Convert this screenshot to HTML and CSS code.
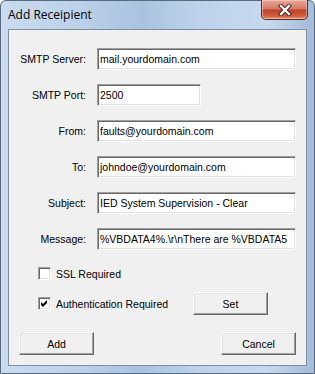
FILE: index.html
```html
<!DOCTYPE html>
<html lang="en">

<head>
    <meta charset="UTF-8">
    <title>Add Receipient</title>
    <link rel="stylesheet" href="styles.css">
</head>

<body>
    <div class="window">
        <!-- Title bar -->
        <div class="titlebar">
            <span class="title">Add Receipient</span>
            <button class="close-btn" type="button" aria-label="Close">
                <svg width="16" height="12" viewBox="0 0 16 12">
                    <path d="M4 2 L12 10 M12 2 L4 10" stroke="#3b1a14" stroke-width="4.2" stroke-linecap="square" fill="none" />
                    <path d="M4 2 L12 10 M12 2 L4 10" stroke="#ffffff" stroke-width="2.4" stroke-linecap="square" fill="none" />
                </svg>
            </button>
        </div>

        <!-- Client area -->
        <form class="client">
            <div class="fields">
                <label class="field-label" for="smtpServer">SMTP Server:</label>
                <input class="field-input" id="smtpServer" type="text" value="mail.yourdomain.com">

                <label class="field-label" for="smtpPort">SMTP Port:</label>
                <input class="field-input short" id="smtpPort" type="text" value="2500">

                <label class="field-label" for="from">From:</label>
                <input class="field-input" id="from" type="text" value="faults@yourdomain.com">

                <label class="field-label" for="to">To:</label>
                <input class="field-input" id="to" type="text" value="johndoe@yourdomain.com">

                <label class="field-label" for="subject">Subject:</label>
                <input class="field-input" id="subject" type="text" value="IED System Supervision - Clear">

                <label class="field-label" for="message">Message:</label>
                <input class="field-input" id="message" type="text" value="%VBDATA4%.\r\nThere are %VBDATA5">
            </div>

            <div class="options">
                <div class="option-row">
                    <span class="check"></span>
                    <span class="option-text">SSL Required</span>
                </div>
                <div class="option-row auth-row">
                    <span class="check checked">
                        <svg width="9" height="9" viewBox="0 0 9 9">
                            <polygon points="1,3 3,5 7,1 7,4 3,8 1,6" fill="#000" />
                        </svg>
                    </span>
                    <span class="option-text auth-text">Authentication Required</span>
                    <button class="win-btn" type="button">Set</button>
                </div>
            </div>

            <div class="actions">
                <button class="win-btn" type="button">Add</button>
                <button class="win-btn" type="button">Cancel</button>
            </div>
        </form>
    </div>
</body>

</html>
```

FILE: styles.css
```css
/* Windows 7 style dialog */
body {
    margin: 0;
    background-color: #ffffff;
    font-family: 'Liberation Sans', Arial, sans-serif;
    font-size: 10.5px;
    color: #000;
}

.window {
    width: 315px;
    height: 374px;
    box-sizing: border-box;
    border: 1px solid #5a6b7f;
    border-radius: 6px 6px 0 0;
    background: linear-gradient(to right, #c9dbef 0%, #bcd1e9 25%, #a9c2df 45%, #bdd2ea 62%, #c6d9ee 85%, #a3bcd9 100%);
    display: flex;
    flex-direction: column;
}

.titlebar {
    height: 28px;
    display: flex;
    align-items: flex-start;
    justify-content: space-between;
}

.title {
    font-family: 'Open Sans', 'Noto Sans', sans-serif;
    font-size: 12px;
    margin: 5px 0 0 7px;
    color: #000;
}

.close-btn {
    width: 47px;
    height: 20px;
    margin: -1px 6px 0 0;
    padding: 0;
    border: 1px solid #5d2a20;
    border-top: none;
    border-radius: 0 0 5px 5px;
    background: linear-gradient(to bottom, #e9a99b 0%, #d67a64 45%, #c0402a 55%, #d0603f 85%, #e49a7e 100%);
    box-shadow: inset 0 0 0 1px rgba(255, 220, 210, 0.5);
    display: flex;
    align-items: center;
    justify-content: center;
}

.client {
    margin: 0 7px 7px 7px;
    flex: 1;
    box-sizing: border-box;
    border: 1px solid #7d8fa3;
    background-color: #f0f0f0;
    padding: 18px 10px 10px 10px;
    display: flex;
    flex-direction: column;
}

.fields {
    display: grid;
    grid-template-columns: 67px 199px;
    column-gap: 11px;
    row-gap: 14px;
    grid-auto-rows: 22px;
    align-items: center;
}

.field-label {
    text-align: right;
    white-space: nowrap;
}

.field-input {
    height: 22px;
    width: 199px;
    box-sizing: border-box;
    margin: 0;
    padding: 0 0 0 2px;
    font-family: 'Liberation Sans', Arial, sans-serif;
    font-size: 10.5px;
    color: #000;
    background-color: #fff;
    border-style: solid;
    border-width: 1px;
    border-color: #a0a0a0 #ffffff #ffffff #a0a0a0;
    box-shadow: inset 1px 1px 0 #696969, inset -1px -1px 0 #e3e3e3;
    outline: none;
}

.field-input.short {
    width: 104px;
}

.options {
    margin-top: 17px;
    padding-left: 19px;
    display: flex;
    flex-direction: column;
    gap: 12px;
}

.option-row {
    display: flex;
    align-items: center;
    height: 13px;
}

.auth-row {
    height: 23px;
}

.check {
    width: 13px;
    height: 13px;
    box-sizing: border-box;
    background-color: #fff;
    border-style: solid;
    border-width: 1px;
    border-color: #a0a0a0 #ffffff #ffffff #a0a0a0;
    box-shadow: inset 1px 1px 0 #696969, inset -1px -1px 0 #e3e3e3;
    display: flex;
    align-items: center;
    justify-content: center;
}

.option-text {
    margin-left: 5px;
}

.auth-text {
    width: 137px;
}

.win-btn {
    width: 75px;
    height: 23px;
    margin: 0;
    padding: 0;
    font-family: 'Liberation Sans', Arial, sans-serif;
    font-size: 10.5px;
    color: #000;
    background-color: #f0f0f0;
    border-style: solid;
    border-width: 1px;
    border-color: #ffffff #696969 #696969 #ffffff;
    box-shadow: inset -1px -1px 0 #a0a0a0, inset 1px 1px 0 #e3e3e3;
}

.actions {
    margin-top: auto;
    display: flex;
    justify-content: space-between;
}
```
